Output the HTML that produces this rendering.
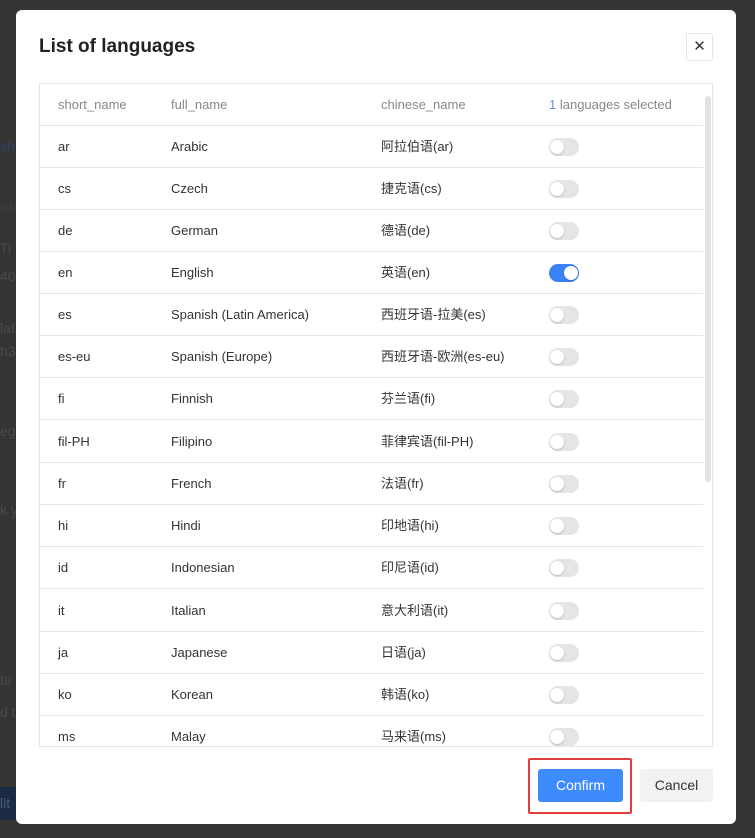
<!DOCTYPE html>
<html><head><meta charset="utf-8"><style>
*{box-sizing:border-box;margin:0;padding:0}
body{width:755px;height:838px;background:#343434;position:relative;overflow:hidden;font-family:"Liberation Sans","Noto Sans CJK SC",sans-serif;font-size:13px;color:#333}
.bg{position:absolute;color:#4a4a4a;font-size:14px;left:0}
.modal{position:absolute;left:16px;top:10px;width:720px;height:814px;background:#fff;border-radius:6px}
h1{position:absolute;left:23px;top:25px;font-size:19px;line-height:24px;font-weight:bold;color:#222}
.close{position:absolute;left:670px;top:23px;width:27px;height:28px;border:1px solid #e4e4e4;border-radius:3px;text-align:center;line-height:26px;font-size:15px;color:#333}
.tbl{position:absolute;left:23px;top:73px;width:674px;height:664px;border:1px solid #e6e6e6;overflow:hidden}
.row{position:absolute;left:0;width:663px;height:42px;border-bottom:1px solid #e6e6e6}
.row span{position:absolute;top:0;line-height:41px;height:41px;white-space:nowrap}
.c1{left:18px}.c2{left:131px}.c3{left:341px}
.hd span{color:#888}
.hd .c4{left:509px}
.tg{position:absolute;left:509px;top:12px;width:30px;height:18px;border-radius:9px;background:#e5e5e5}
.tg::after{content:"";position:absolute;left:1px;top:2px;width:14px;height:14px;border-radius:50%;background:#fff;box-shadow:0 1px 2px rgba(0,0,0,.2)}
.tg.on{background:#3b82f6}.tg.on::after{left:15px}
.sb{position:absolute;left:665px;top:12px;width:6px;height:386px;background:#e2e2e2;border-radius:3px}
.red{position:absolute;left:512px;top:748px;width:104px;height:56px;border:2px solid #e53e3e;border-radius:2px}
.btn{position:absolute;top:759px;height:33px;line-height:33px;text-align:center;font-size:14px;border-radius:3px}
.ok{left:522px;width:85px;background:#3d8bfd;color:#fff}
.cancel{left:624px;width:73px;background:#f2f2f2;color:#333}
</style></head><body>
<div class="bg" style="top:138px;color:#2e4466">sh-</div>
<div class="bg" style="top:198px;font-weight:bold;color:#3a3a3a">ou</div>
<div class="bg" style="top:240px">Ti</div>
<div class="bg" style="top:268px">403</div>
<div class="bg" style="top:320px">lat</div>
<div class="bg" style="top:343px">h3</div>
<div class="bg" style="top:423px">egi</div>
<div class="bg" style="top:502px">k y</div>
<div class="bg" style="top:672px">te</div>
<div class="bg" style="top:704px">d t</div>
<div style="position:absolute;left:0;top:787px;width:16px;height:33px;background:#1c2b44;color:#4a5d80;font-size:14px;line-height:33px">lit</div>
<div class="modal">
<h1>List of languages</h1>
<div class="close">✕</div>
<div class="tbl">
<div class="row hd" style="top:0"><span class="c1">short_name</span><span class="c2">full_name</span><span class="c3">chinese_name</span><span class="c4"><span style="position:static;color:#6b8fe0">1</span> languages selected</span></div>
<div class="row" style="top:42px"><span class="c1">ar</span><span class="c2">Arabic</span><span class="c3">阿拉伯语(ar)</span><div class="tg"></div></div>
<div class="row" style="top:84px"><span class="c1">cs</span><span class="c2">Czech</span><span class="c3">捷克语(cs)</span><div class="tg"></div></div>
<div class="row" style="top:126px"><span class="c1">de</span><span class="c2">German</span><span class="c3">德语(de)</span><div class="tg"></div></div>
<div class="row" style="top:168px"><span class="c1">en</span><span class="c2">English</span><span class="c3">英语(en)</span><div class="tg on"></div></div>
<div class="row" style="top:210px"><span class="c1">es</span><span class="c2">Spanish (Latin America)</span><span class="c3">西班牙语-拉美(es)</span><div class="tg"></div></div>
<div class="row" style="top:252px"><span class="c1">es-eu</span><span class="c2">Spanish (Europe)</span><span class="c3">西班牙语-欧洲(es-eu)</span><div class="tg"></div></div>
<div class="row" style="top:294px"><span class="c1">fi</span><span class="c2">Finnish</span><span class="c3">芬兰语(fi)</span><div class="tg"></div></div>
<div class="row" style="top:337px"><span class="c1">fil-PH</span><span class="c2">Filipino</span><span class="c3">菲律宾语(fil-PH)</span><div class="tg"></div></div>
<div class="row" style="top:379px"><span class="c1">fr</span><span class="c2">French</span><span class="c3">法语(fr)</span><div class="tg"></div></div>
<div class="row" style="top:421px"><span class="c1">hi</span><span class="c2">Hindi</span><span class="c3">印地语(hi)</span><div class="tg"></div></div>
<div class="row" style="top:463px"><span class="c1">id</span><span class="c2">Indonesian</span><span class="c3">印尼语(id)</span><div class="tg"></div></div>
<div class="row" style="top:506px"><span class="c1">it</span><span class="c2">Italian</span><span class="c3">意大利语(it)</span><div class="tg"></div></div>
<div class="row" style="top:548px"><span class="c1">ja</span><span class="c2">Japanese</span><span class="c3">日语(ja)</span><div class="tg"></div></div>
<div class="row" style="top:590px"><span class="c1">ko</span><span class="c2">Korean</span><span class="c3">韩语(ko)</span><div class="tg"></div></div>
<div class="row" style="top:632px;border-bottom:none"><span class="c1">ms</span><span class="c2">Malay</span><span class="c3">马来语(ms)</span><div class="tg"></div></div>
<div class="sb"></div>
</div>
<div class="red"></div>
<div class="btn ok">Confirm</div>
<div class="btn cancel">Cancel</div>
</div>
</body></html>
